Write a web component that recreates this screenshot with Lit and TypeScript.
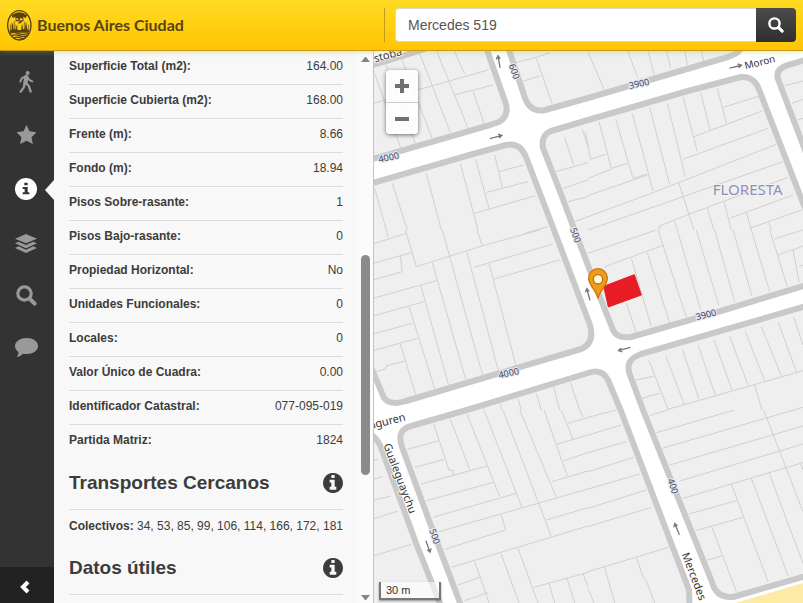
import { LitElement, html, css, svg } from "lit";
import { customElement, state } from "lit/decorators.js";
import { classMap } from "lit/directives/class-map.js";

const infoPath =
  "M1152 1376v-160q0-14-9-23t-23-9h-96v-512q0-14-9-23t-23-9h-320q-14 0-23 9t-9 23v160q0 14 9 23t23 9h96v320h-96q-14 0-23 9t-9 23v160q0 14 9 23t23 9h448q14 0 23-9t9-23zm-128-896v-160q0-14-9-23t-23-9h-192q-14 0-23 9t-9 23v160q0 14 9 23t23 9h192q14 0 23-9t9-23zm640 416q0 209-103 385.5t-279.5 279.5-385.5 103-385.5-103-279.5-279.5-103-385.5 103-385.5 279.5-279.5 385.5-103 385.5 103 279.5 279.5 103 385.5z";

const infoIcon = (size: number) => html`<svg
  width=${size}
  height=${size}
  viewBox="128 128 1536 1536"
  fill="currentColor"
  aria-hidden="true"
>
  <path d=${infoPath} />
</svg>`;

/* Lower-case i with serifs, lighter than the one in the headings. */
const infoToolIcon = html`<svg width="22" height="22" viewBox="0 0 66 66" aria-hidden="true">
  <circle cx="33" cy="33" r="33" fill="currentColor" />
  <path d="M28 14H38V22H28ZM23 27H38V43H43V49H23V43H29V33H23Z" fill="#333" />
</svg>`;

const searchIcon = (size: number) => html`<svg
  width=${size}
  height=${size}
  viewBox="0 0 21 21"
  fill="none"
  stroke="currentColor"
  aria-hidden="true"
>
  <circle cx="8.500" cy="8.500" r="6.700" stroke-width="3.200" />
  <path d="M14 14l4.600 4.600" stroke-width="4" stroke-linecap="round" />
</svg>`;

/* ---------- Map ---------- */

/* Block outlines, in window coordinates. */
const blocks = [
  "M360 69L373 65L425 49V40H484L487 50L506 104Q509 116 499 122L490 125L373 159L360 163Z",
  "M506 40L509 50L524 95Q529 113 545 110L588 98L728 57Q740 53 742 46V40Z",
  "M603 305L613 330Q617 339 631 337L721 311L803 286L815 282V230L803 203L760 92Q755 76 741 77L688 91L588 120L551 131Q541 135 543 148L559 189Z",
  "M360 187L373 183L473 154L506 145Q520 142 526 157L554 230L590 325Q595 343 581 349L490 376L406 401Q391 406 384 398L373 372L360 340Z",
  "M450 620L460 603L430 523L402 447Q396 430 411 426L470 409L588 373Q602 368 608 380L621 411L689 590L690 620Z",
  "M815 303L803 307L641 354Q624 360 630 375L643 410L691 530L712 582Q716 598 733 597L803 577L815 573Z",
  "M815 57L788 65Q775 69 778 79L803 145L815 175Z",
  "M360 425L373 436Q379 441 382 450L416 543L441 606V620H360Z",
];

/* Parcel boundaries, one path for each map tile. */
const tiles = [
  {
    x: 0,
    y: -3,
    d: "M0 160L60 143M130 121L345 60M5 70L85 300M35 35L130 288M85 25L180 272M140 10L232 248M190 0L285 235M243 0L275 72M243 135L360 105M300 122L333 220M5 415L40 540M58 400L103 540M160 370L205 540M262 340L315 540M308 328L348 475M365 315L388 412M378 365L452 345M340 427L465 395M305 490L487 437M455 550L525 530M575 262L602 345M628 238L645 290M548 365L645 338M570 415L645 390M585 455L645 440M605 515L645 500M430 37L490 22L530 8M490 25L537 160M445 95L500 78",
  },
  {
    x: 645,
    y: -3,
    d: "M0 5L48 118M118 0L150 85M180 0L198 75M235 0L248 55M290 0L298 45M340 0L347 33M-8 245L8 328L53 312M33 215L70 355L118 340M0 385L70 358M83 207L135 385L178 372M133 190L195 422M185 172L245 403M238 160L292 380M285 140L328 305M338 128L366 240M388 115L415 220M405 172L515 138M318 260L522 183M285 328L540 235M0 437L178 375M0 500L195 428L565 283M0 540L285 440L585 335M272 398L318 540M210 530L305 492L600 382M425 505L615 435M485 535L640 480M212 530L216 540M260 515L268 540M358 475L378 540M408 455L430 540M475 488L490 540M542 518L550 540M590 107L645 93M612 160L645 148M630 210L645 205",
  },
  {
    x: 0,
    y: 537,
    d: "M40 0L45 22M0 42L100 10M97 0L130 110M0 100L115 68M82 78L88 125L0 150M130 110L330 47L500 0M208 0L230 80L330 440M312 0L328 47M282 68L378 430M303 112L540 42M348 100L430 410M362 147L560 90M178 98L280 455M0 205L190 152M143 165L228 470M0 258L153 215M108 230L188 485M0 312L118 280M0 362L133 325M82 342L130 500M8 425L38 417L40 408L95 393M330 530L333 540M380 515L387 540M435 505L445 540M490 490L505 540M542 470L560 540M592 457L620 540",
  },
  {
    x: 645,
    y: 537,
    d: "M0 70L205 0M50 110L228 45M210 0L295 262M130 85L190 290M178 68L245 278M268 0L338 240M325 0L392 225M380 0L440 215M435 0L492 198M490 0L545 185M545 0L598 170M558 27L645 0M570 75L645 48M615 60L633 155M633 110L645 105M115 220L145 308M183 392L240 538M233 378L290 525M283 358L333 508M330 345L382 495M378 330L432 480M425 318L480 465M472 305L530 452M520 290L580 438M570 275L625 425M617 262L645 345M240 538L645 422M135 452L200 438M160 505L215 490M500 465L522 540",
  },
  {
    x: 0,
    y: 1077,
    d: "M182 42L228 180L240 182V195M232 28L290 178M282 12L380 260M333 0L447 293M390 0L497 280M440 0L550 262M513 0L583 198M565 0L600 88M620 0L630 22M585 40L645 22M550 103L645 75M572 152L645 128M537 215L645 183M103 118L195 93M125 172L215 148M145 222L342 168M160 272L362 217M180 322L430 250M198 365L645 237M385 315L398 360L215 418M497 280L535 380M520 330L645 293M235 472L645 348M305 455L348 579M255 525L325 500M275 572L345 548M385 433L438 579M435 415L495 579M483 532L645 487M528 520L545 579M582 505L605 579M630 492L645 530M0 150L15 148M0 208L30 200M0 270L55 258M0 327L75 303M0 438L115 403",
  },
  {
    x: 645,
    y: 1077,
    d: "M0 22L85 0M0 75L100 45M0 128L115 95M0 185L138 142M0 237L155 192M0 295L175 240M0 350L190 292M0 485L242 412M50 472L80 579M145 442L165 500L175 512L200 579M0 535L18 579M185 17L240 0M205 68L440 0M222 115L645 -8M245 165L645 48M275 213L645 102M285 265L645 158M303 312L445 272M322 362L465 322M430 222L540 515M490 205L600 497M543 188L645 460M527 0L645 305M372 352L445 545M352 452L402 438M638 160L645 180",
  },
];

/* x, y, angle */
const arrows: [number, number, number][] = [
  [378, 32, -100],
  [369, 258, -14],
  [1088, 47, -13],
  [754, 894, 166],
  [646, 730, -105],
  [165, 1487, 70],
  [912, 1434, -112],
];

const labels = [
  { text: "4000", x: 47, y: 318, r: -12, kind: "number" },
  { text: "3900", x: 798, y: 97, r: -12, kind: "number" },
  { text: "4000", x: 407, y: 965, r: -12, kind: "number" },
  { text: "3900", x: 999, y: 790, r: -14, kind: "number" },
  { text: "600", x: 425, y: 61, r: 70, kind: "number" },
  { text: "500", x: 609, y: 552, r: 70, kind: "number" },
  { text: "500", x: 186, y: 1456, r: 72, kind: "number" },
  { text: "400", x: 901, y: 1305, r: 72, kind: "number" },
  { text: "Moron", x: 1160, y: 32, r: -14, kind: "street short" },
  { text: "Mercedes", x: 965, y: 1575, r: 69, kind: "street" },
  { text: "Gualeguaychu", x: 83, y: 1281, r: 69, kind: "street" },
  { text: "Aranguren", x: 16, y: 1115, r: -14, kind: "street" },
  { text: "stoba", x: 44, y: 10, r: -15, kind: "street" },
  { text: "FLORESTA", x: 1124, y: 415, r: 0, kind: "district" },
];

@customElement("city-map")
class CityMap extends LitElement {
  static styles = css`
    :host {
      display: block;
      position: relative;
      overflow: hidden;
      background: #fff;
    }
    .canvas {
      display: block;
      width: 100%;
      height: 100%;
    }
    .block {
      fill: #efefef;
      stroke: #c9c9c9;
      stroke-width: 6;
      stroke-linejoin: round;
    }
    .parcel {
      fill: none;
      stroke: #d0d0d0;
      stroke-width: 3;
    }
    .arrow {
      fill: none;
      stroke: #777;
      stroke-width: 4;
    }
    text {
      font-family: "Noto Sans", sans-serif;
      text-anchor: middle;
      dominant-baseline: central;
      paint-order: stroke;
    }
    .number {
      font-size: 27px;
      fill: #44445c;
      stroke: #e6e6ee;
      stroke-width: 7;
    }
    .street {
      font-size: 33px;
      fill: #333;
      stroke: #fff;
      stroke-width: 5;
    }
    .short {
      font-size: 30px;
    }
    .district {
      font-size: 45px;
      fill: #8d8fb5;
      stroke: #f4f4f6;
      stroke-width: 4;
    }
    .zoom {
      position: absolute;
      left: 12px;
      top: 19px;
      display: flex;
      flex-direction: column;
      width: 32px;
      border-radius: 4px;
      overflow: hidden;
      box-shadow: 0 1px 4px rgba(0, 0, 0, 0.55);
    }
    .zoom button {
      display: grid;
      place-items: center;
      height: 32px;
      padding: 0;
      border: 0;
      background: rgba(255, 255, 255, 0.86);
      color: #707070;
    }
    .zoom button + button {
      border-top: 1px solid #ccc;
    }
    .scale {
      position: absolute;
      left: 5px;
      bottom: 3px;
      box-sizing: border-box;
      width: 62px;
      padding: 0 5px;
      border: 2px solid #777;
      border-top: 0;
      background: rgba(255, 255, 255, 0.6);
      box-shadow: 0 1px 2px rgba(0, 0, 0, 0.4);
      color: #333;
      font: 11px/16px "Liberation Sans", Arial, sans-serif;
    }
  `;

  render() {
    return html`
      <svg
        class="canvas"
        viewBox="3 0 1287 1656"
        preserveAspectRatio="xMinYMin slice"
        role="img"
        aria-label="Mapa de Floresta"
      >
        <g transform="scale(3) translate(-373 -51)">
          ${blocks.map((d) => svg`<path class="block" d=${d} />`)}
          <path d="M729 605L803 583L815 579V605Z" fill="#fdeaa4" />
        </g>
        ${tiles.map(
          (t) => svg`<path class="parcel" d=${t.d} transform="translate(${t.x} ${t.y})" />`
        )}
        ${arrows.map(
          ([x, y, a]) => svg`<path
            class="arrow"
            d="M-19 0H19M8 -7L18 0L8 5"
            transform="translate(${x} ${y}) rotate(${a})"
          />`
        )}
        ${labels.map(
          (l) => svg`<text
            class=${l.kind}
            transform="translate(${l.x} ${l.y}) rotate(${l.r})"
          >${l.text}</text>`
        )}
        <path
          d="M692 706L784 671L805 732L706 768Z"
          fill="#e81c24"
          stroke="#e81c24"
          stroke-width="3"
          stroke-linejoin="round"
        />
        <path
          d="M675 742C669 716 647 704 647 681A28 28 0 0 1 703 681C703 704 681 716 675 742Z"
          fill="#f49a1a"
          stroke="#c97708"
          stroke-width="4"
        />
        <circle cx="675" cy="685" r="14" fill="#fffbd8" stroke="#b9750f" stroke-width="4" />
      </svg>
      <div class="zoom">
        <button type="button" aria-label="Acercar">
          <svg width="14" height="14" viewBox="0 0 14 14" stroke="currentColor" stroke-width="4">
            <path d="M0 7H14M7 0V14" />
          </svg>
        </button>
        <button type="button" aria-label="Alejar">
          <svg width="14" height="14" viewBox="0 0 14 14" stroke="currentColor" stroke-width="4">
            <path d="M0 7H14" />
          </svg>
        </button>
      </div>
      <div class="scale">30 m</div>
    `;
  }
}

/* ---------- Page ---------- */

const rows: [string, string][] = [
  ["Superficie Total (m2):", "164.00"],
  ["Superficie Cubierta (m2):", "168.00"],
  ["Frente (m):", "8.66"],
  ["Fondo (m):", "18.94"],
  ["Pisos Sobre-rasante:", "1"],
  ["Pisos Bajo-rasante:", "0"],
  ["Propiedad Horizontal:", "No"],
  ["Unidades Funcionales:", "0"],
  ["Locales:", "0"],
  ["Valor Único de Cuadra:", "0.00"],
  ["Identificador Catastral:", "077-095-019"],
  ["Partida Matriz:", "1824"],
];

const tools = [
  {
    id: "walk",
    name: "Cómo llego",
    icon: html`<svg width="15" height="22" viewBox="0 0 45 66" fill="none" stroke="currentColor" stroke-linecap="round" stroke-linejoin="round">
      <circle cx="26" cy="6" r="6" fill="currentColor" stroke="none" />
      <path d="M22 18L19 36" stroke-width="13" />
      <path d="M19 16L8 22L4 32M25 18L31 27L40 31" stroke-width="6" />
      <path d="M22 37L30 46L35 62M17 38L14 50L5 62" stroke-width="7" />
    </svg>`,
  },
  {
    id: "star",
    name: "Favoritos",
    icon: html`<svg width="21" height="19" viewBox="0 0 60 57" fill="currentColor">
      <path d="M30 0L39 19L60 22L45 37L49 57L30 47L11 57L15 37L0 22L21 19Z" />
    </svg>`,
  },
  { id: "info", name: "Información", icon: infoToolIcon },
  {
    id: "layers",
    name: "Capas",
    icon: html`<svg width="22" height="19" viewBox="0 0 66 57" fill="currentColor">
      <path d="M33 0L66 14L33 28L0 14Z" />
      <path d="M0 28L11 23L33 33L55 23L66 28L33 43Z" />
      <path d="M0 42L11 37L33 47L55 37L66 42L33 57Z" />
    </svg>`,
  },
  { id: "search", name: "Buscar", icon: searchIcon(21) },
  {
    id: "chat",
    name: "Comentarios",
    icon: html`<svg width="23" height="19" viewBox="0 0 69 57" fill="currentColor">
      <path d="M35 0C54 0 69 10 69 24S54 48 35 48C31 48 27 48 24 47C19 52 12 56 5 57C9 53 11 48 10 42C4 38 0 31 0 24C0 10 16 0 35 0Z" />
    </svg>`,
  },
];

@customElement("app-root")
class AppRoot extends LitElement {
  static styles = css`
    :host {
      display: flex;
      flex-direction: column;
      height: 100vh;
      overflow: hidden;
      color: #3c3c3c;
      font: 12px/16px "Liberation Sans", Arial, sans-serif;
    }
    header {
      position: relative;
      z-index: 1;
      display: flex;
      align-items: center;
      height: 50px;
      flex: none;
      padding-right: 7px;
      background: linear-gradient(#ffdb22, #ffc503);
      border-bottom: 1px solid #c79a1c;
      box-shadow: 0 1px 6px rgba(190, 180, 40, 0.35);
    }
    .brand {
      display: flex;
      align-items: center;
      gap: 5px;
      box-sizing: border-box;
      width: 385px;
      height: 34px;
      flex: none;
      padding-left: 7px;
      border-right: 1px solid #c79a1c;
      color: #59420f;
      font: 700 16px/20px Lato, sans-serif;
      text-decoration: none;
    }
    form {
      display: flex;
      flex: 1;
      height: 34px;
      margin-left: 10px;
    }
    input {
      flex: 1;
      min-width: 0;
      padding: 0 12px;
      border: 1px solid #ddd8c0;
      border-right: 0;
      border-radius: 4px 0 0 4px;
      background: #fff;
      color: #555;
      font: 14px/20px "Liberation Sans", Arial, sans-serif;
    }
    .go {
      display: grid;
      place-items: center;
      width: 40px;
      padding: 0;
      border: 0;
      border-radius: 0 4px 4px 0;
      background: linear-gradient(#4c4c4c, #2e2e2e);
      color: #fff;
    }
    main {
      display: flex;
      flex: 1;
      min-height: 0;
    }
    nav {
      display: flex;
      flex-direction: column;
      justify-content: space-between;
      width: 54px;
      flex: none;
      background: #333;
    }
    .tools {
      display: flex;
      flex-direction: column;
      gap: 32px;
      margin: 0;
      padding: 20px 0 0;
      list-style: none;
    }
    .tool {
      position: relative;
      display: grid;
      place-items: center;
      width: 54px;
      padding: 0 2px 0 0;
      border: 0;
      background: none;
      color: #999;
    }
    .tool.active {
      height: 26px;
      color: #fff;
    }
    .tool.active::after {
      content: "";
      position: absolute;
      right: 0;
      top: 4px;
      border: 10px solid transparent;
      border-right: 9px solid #f8f8f8;
      border-left: 0;
    }
    .collapse {
      display: grid;
      place-items: center;
      height: 36px;
      padding: 4px 4px 0 0;
      border: 0;
      background: #222;
      color: #fff;
    }
    aside {
      display: flex;
      width: 319px;
      flex: none;
      background: #f8f8f8;
      border-right: 1px solid #c4c4c4;
    }
    .content {
      flex: 1;
      overflow: hidden;
      padding: 0 14px 0 15px;
    }
    table {
      width: 100%;
      border-collapse: separate;
      border-spacing: 0;
    }
    th,
    td {
      padding: 7px 0 10px;
      border-bottom: 1px solid #dcdcdc;
      text-align: left;
    }
    td {
      text-align: right;
    }
    tr:last-child > * {
      border-color: transparent;
    }
    .title {
      display: flex;
      align-items: center;
      justify-content: space-between;
      padding: 12px 0 14px;
      border-bottom: 1px solid #dcdcdc;
    }
    h2 {
      margin: 0;
      font-size: 19px;
      line-height: 24px;
    }
    .title svg {
      display: block;
    }
    p {
      margin: 0;
      padding: 8px 0 10px;
      white-space: nowrap;
    }
    .scroll {
      display: flex;
      flex-direction: column;
      align-items: center;
      width: 16px;
      padding: 3px 0 0;
      box-sizing: border-box;
      background: #fbfbfb;
      color: #858585;
    }
    .before {
      flex: 188;
    }
    .thumb {
      flex: 218;
      width: 9px;
      border-radius: 5px;
      background: #8b8b8b;
    }
    .after {
      flex: 116;
    }
    city-map {
      flex: 1;
      min-width: 0;
    }
  `;

  @state() private active = "info";

  private section(title: string, body: unknown = "") {
    return html`<section>
      <div class="title"><h2>${title}</h2>${infoIcon(20)}</div>
      ${body}
    </section>`;
  }

  render() {
    return html`
      <header>
        <a class="brand" href="#">
          <svg width="25" height="31" viewBox="0 0 75 93" fill="none" stroke="currentColor" aria-hidden="true">
            <ellipse cx="37" cy="46" rx="35" ry="44" stroke-width="4" />
            <path d="M14 16Q37 -2 60 16L56 24L48 20L50 28L40 24L37 32L32 24L24 28L26 20L17 24Z" fill="currentColor" stroke="none" />
            <path d="M26 34Q30 28 36 32T50 29M34 38Q40 40 44 34" stroke-width="4" />
            <path d="M7 62L14 58V36L18 44L20 58H26V42L31 60H43L47 40V58L54 56L57 34L61 58L68 62L64 68H10Z" fill="currentColor" stroke="none" />
            <path d="M22 34V60M52 36V58M10 44V60M65 44V60M30 46V60M44 46V60" stroke-width="2" />
            <path d="M9 70Q20 64 32 70T66 70M13 77Q25 72 37 77T62 77M20 84Q30 79 40 84T54 84" stroke-width="4" />
          </svg>
          Buenos Aires Ciudad
        </a>
        <form @submit=${(e: Event) => e.preventDefault()}>
          <input type="text" aria-label="Buscar dirección" value="Mercedes 519" />
          <button class="go" aria-label="Buscar">${searchIcon(16)}</button>
        </form>
      </header>
      <main>
        <nav>
          <ul class="tools">
            ${tools.map(
              (t) => html`<li>
                <button
                  type="button"
                  class=${classMap({ tool: true, active: t.id === this.active })}
                  aria-label=${t.name}
                  @click=${() => (this.active = t.id)}
                >
                  ${t.icon}
                </button>
              </li>`
            )}
          </ul>
          <button type="button" class="collapse" aria-label="Ocultar panel">
            <svg width="10" height="14" viewBox="0 0 10 14" fill="none" stroke="currentColor" stroke-width="4">
              <path d="M8 2L3 7L8 12" />
            </svg>
          </button>
        </nav>
        <aside>
          <div class="content">
            <table>
              <tbody>
                ${rows.map(
                  ([name, value]) => html`<tr>
                    <th scope="row">${name}</th>
                    <td>${value}</td>
                  </tr>`
                )}
              </tbody>
            </table>
            ${this.section(
              "Transportes Cercanos",
              html`<p><b>Colectivos:</b> 34, 53, 85, 99, 106, 114, 166, 172, 181</p>`
            )}
            ${this.section("Datos útiles")}
          </div>
          <div class="scroll" aria-hidden="true">
            <svg width="9" height="11" viewBox="0 0 9 11" fill="currentColor"><path d="M0 8L4 3H5L9 8Z" /></svg>
            <div class="before"></div>
            <div class="thumb"></div>
            <div class="after"></div>
            <svg width="9" height="11" viewBox="0 0 9 11" fill="currentColor"><path d="M0 3L4 8H5L9 3Z" /></svg>
          </div>
        </aside>
        <city-map></city-map>
      </main>
    `;
  }
}
